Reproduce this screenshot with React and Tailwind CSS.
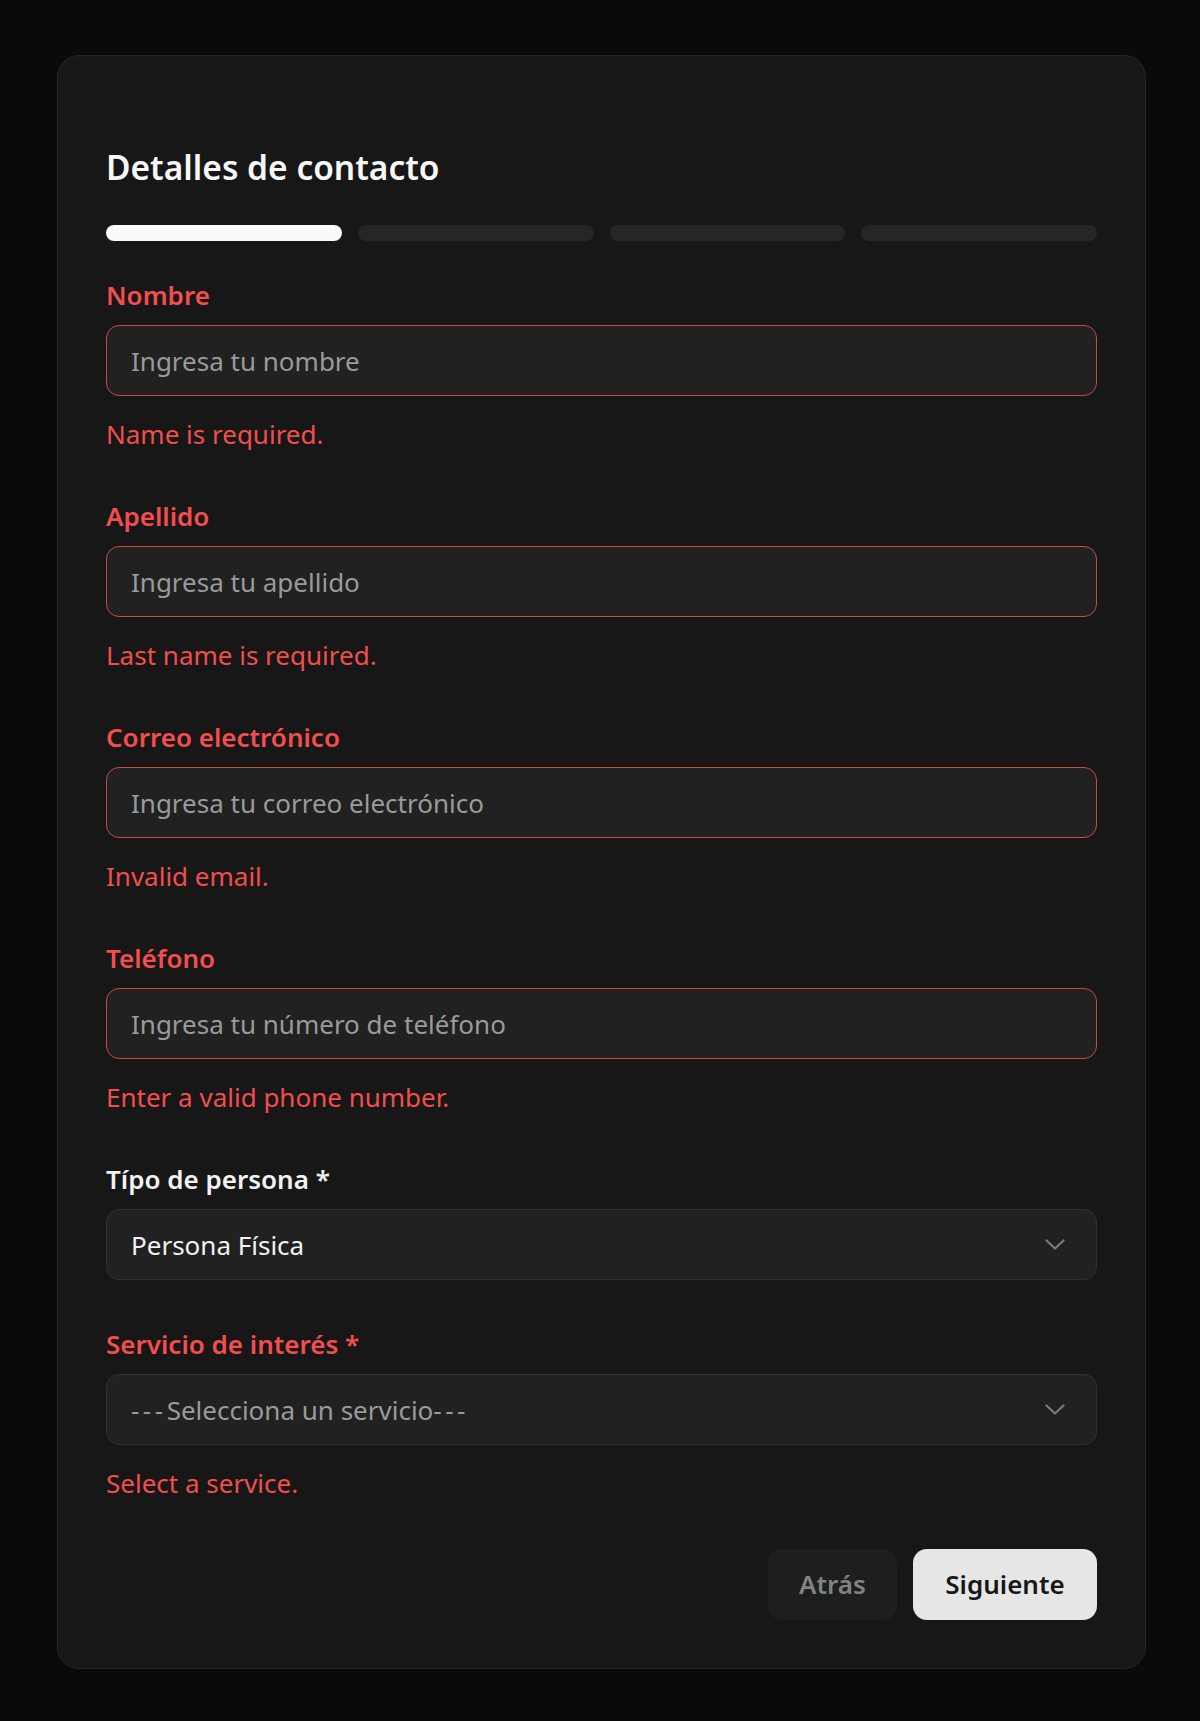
import React from "react";

const font = { fontFamily: '"Noto Sans", "Open Sans", sans-serif' };

function Label({ children, error }) {
  return (
    <div
      className={`text-[26px] leading-[32px] font-semibold mb-[14px] ${
        error ? "text-[#f24d4f]" : "text-[#f2f2f2]"
      }`}
    >
      {children}
    </div>
  );
}

function ErrorText({ children }) {
  return (
    <div className="mt-[20px] text-[26px] leading-[36px] text-[#f24d4f]">
      {children}
    </div>
  );
}

function TextField({ label, placeholder, error }) {
  return (
    <div>
      <Label error>{label}</Label>
      <input
        readOnly
        placeholder={placeholder}
        style={font}
        className="block w-full h-[71px] rounded-[13px] border border-[#c24a4c] bg-[#212121] pl-6 pr-6 text-[26px] text-[#f2f2f2] placeholder:text-[#999a9b] outline-none"
      />
      <ErrorText>{error}</ErrorText>
    </div>
  );
}

function Chevron() {
  return (
    <svg width="20" height="12" viewBox="0 0 20 12" fill="none" className="shrink-0">
      <polyline
        points="1.5,1.5 10,9.5 18.5,1.5"
        stroke="#7b7b7b"
        strokeWidth="2.2"
        strokeLinecap="round"
        strokeLinejoin="round"
      />
    </svg>
  );
}

function Dashes() {
  return <span className="tracking-[3.5px]">---</span>;
}

function SelectField({ label, value, placeholder, error, red }) {
  return (
    <div>
      <Label error={red}>{label}</Label>
      <div className="flex items-center justify-between w-full h-[71px] rounded-[13px] border border-[#313131] bg-[#212121] pl-6 pr-[31px]">
        <span
          className={`text-[26px] leading-[36px] ${
            value ? "text-[#f2f2f2]" : "text-[#999a9b]"
          }`}
        >
          {value ? (
            value
          ) : (
            <>
              <Dashes />
              {placeholder}
              <Dashes />
            </>
          )}
        </span>
        <Chevron />
      </div>
      {error && <ErrorText>{error}</ErrorText>}
    </div>
  );
}

export default function App() {
  return (
    <div className="min-h-screen w-full bg-[#0a0a0a] pt-[55px] pb-[52px] pl-[57px]" style={font}>
      <div className="w-[1089px] rounded-[22px] border border-[#262626] bg-[#171717] px-[48px] pt-[91px] pb-[48px]">
        <h1 className="text-[33.5px] leading-[40px] font-semibold text-[#f7f7f7]">
          Detalles de contacto
        </h1>
        <div className="mt-[38px] flex gap-4">
          <div className="h-4 flex-1 rounded-full bg-[#fafafa]" />
          <div className="h-4 flex-1 rounded-full bg-[#262626]" />
          <div className="h-4 flex-1 rounded-full bg-[#262626]" />
          <div className="h-4 flex-1 rounded-full bg-[#262626]" />
        </div>

        <div className="mt-[38px] flex flex-col gap-12">
          <TextField label="Nombre" placeholder="Ingresa tu nombre" error="Name is required." />
          <TextField label="Apellido" placeholder="Ingresa tu apellido" error="Last name is required." />
          <TextField
            label="Correo electrónico"
            placeholder="Ingresa tu correo electrónico"
            error="Invalid email."
          />
          <TextField
            label="Teléfono"
            placeholder="Ingresa tu número de teléfono"
            error="Enter a valid phone number."
          />
          <SelectField label="Típo de persona *" value="Persona Física" />
          <SelectField
            label="Servicio de interés *"
            placeholder="Selecciona un servicio"
            error="Select a service."
            red
          />
        </div>

        <div className="mt-12 flex justify-end gap-4">
          <button
            style={font}
            className="h-[71px] w-[129px] rounded-[14px] bg-[#1d1e1e] text-[26px] font-semibold text-[#828282]"
          >
            Atrás
          </button>
          <button
            style={font}
            className="h-[71px] w-[184px] rounded-[14px] bg-[#e6e6e6] text-[26px] font-semibold text-[#171717]"
          >
            Siguiente
          </button>
        </div>
      </div>
    </div>
  );
}
